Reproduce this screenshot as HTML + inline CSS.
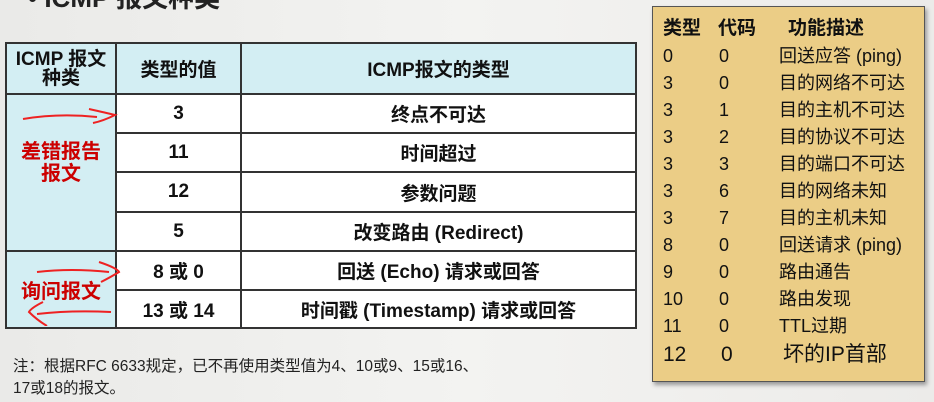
<!DOCTYPE html>
<html><head><meta charset="utf-8"><style>
body{margin:0;width:934px;height:402px;overflow:hidden;background:linear-gradient(90deg,#eaeae8,#f3f3f1 50%,#ecebe9);font-family:"Liberation Sans","Noto Sans CJK SC",sans-serif;position:relative}
.t{position:absolute;left:28px;top:-22px;font-size:26px;font-weight:bold;color:#222}
table{position:absolute;left:5px;top:42px;border-collapse:collapse;font-weight:bold;font-size:19px;color:#111}
td{border:2px solid #333;text-align:center;padding:0;background:#fff}
.h td{background:#d3eef3;height:49px}
.c{background:#d3eef3!important;color:#c00;font-size:20px}
.note{position:absolute;left:13px;top:356px;font-size:15.5px;line-height:22px;color:#222}
.p{position:absolute;left:652px;top:6px;width:271px;height:374px;background:#ebcd86;border:1px solid #555;box-shadow:2px 3px 4px #999;font-size:18px;color:#111}
.r{position:absolute;left:10px;height:27px}
.r span{position:absolute;white-space:nowrap;line-height:27px;top:0}
</style></head><body>
<div class="t">• ICMP 报文种类</div>
<table>
<tr class="h"><td style="width:108px;line-height:19px">ICMP 报文<br>种类</td><td style="width:123px">类型的值</td><td style="width:393px">ICMP报文的类型</td></tr>
<tr style="height:39px"><td class="c" rowspan="4" style="position:relative"><svg style="position:absolute;left:12px;top:10px" width="100" height="20"><path d="M4 14 Q40 8 78 12 M70 4 Q88 8 96 10 Q84 16 74 18" stroke="#e22" stroke-width="2" fill="none"/></svg><div style="margin-top:-20px;line-height:22px">差错报告<br>报文</div></td><td>3</td><td>终点不可达</td></tr>
<tr style="height:39px"><td>11</td><td>时间超过</td></tr>
<tr style="height:40px"><td>12</td><td>参数问题</td></tr>
<tr style="height:39px"><td>5</td><td>改变路由 (Redirect)</td></tr>
<tr style="height:39px"><td class="c" rowspan="2" style="position:relative"><svg style="position:absolute;left:14px;top:4px" width="100" height="70"><path d="M16 16 Q50 12 88 16 M78 6 Q96 12 98 16 Q88 22 80 26 M90 56 Q50 54 16 58 M22 46 Q10 52 8 56 Q16 64 26 70" stroke="#e22" stroke-width="2" fill="none"/></svg>询问报文</td><td>8 或 0</td><td>回送 (Echo) 请求或回答</td></tr>
<tr style="height:38px"><td>13 或 14</td><td>时间戳 (Timestamp) 请求或回答</td></tr>
</table>
<div class="note">注：根据RFC 6633规定，已不再使用类型值为4、10或9、15或16、<br>17或18的报文。</div>
<div class="p">
<div class="r" style="top:8px;font-weight:bold;font-size:19px"><span style="left:0">类型</span><span style="left:55px">代码</span><span style="left:125px">功能描述</span></div>
<div class="r" style="top:36px"><span>0</span><span style="left:56px">0</span><span style="left:116px">回送应答 (ping)</span></div>
<div class="r" style="top:63px"><span>3</span><span style="left:56px">0</span><span style="left:116px">目的网络不可达</span></div>
<div class="r" style="top:90px"><span>3</span><span style="left:56px">1</span><span style="left:116px">目的主机不可达</span></div>
<div class="r" style="top:117px"><span>3</span><span style="left:56px">2</span><span style="left:116px">目的协议不可达</span></div>
<div class="r" style="top:144px"><span>3</span><span style="left:56px">3</span><span style="left:116px">目的端口不可达</span></div>
<div class="r" style="top:171px"><span>3</span><span style="left:56px">6</span><span style="left:116px">目的网络未知</span></div>
<div class="r" style="top:198px"><span>3</span><span style="left:56px">7</span><span style="left:116px">目的主机未知</span></div>
<div class="r" style="top:225px"><span>8</span><span style="left:56px">0</span><span style="left:116px">回送请求 (ping)</span></div>
<div class="r" style="top:252px"><span>9</span><span style="left:56px">0</span><span style="left:116px">路由通告</span></div>
<div class="r" style="top:279px"><span>10</span><span style="left:56px">0</span><span style="left:116px">路由发现</span></div>
<div class="r" style="top:306px"><span>11</span><span style="left:56px">0</span><span style="left:116px">TTL过期</span></div>
<div class="r" style="top:334px;font-size:21px"><span>12</span><span style="left:58px">0</span><span style="left:120px">坏的IP首部</span></div>
</div>
</body></html>
